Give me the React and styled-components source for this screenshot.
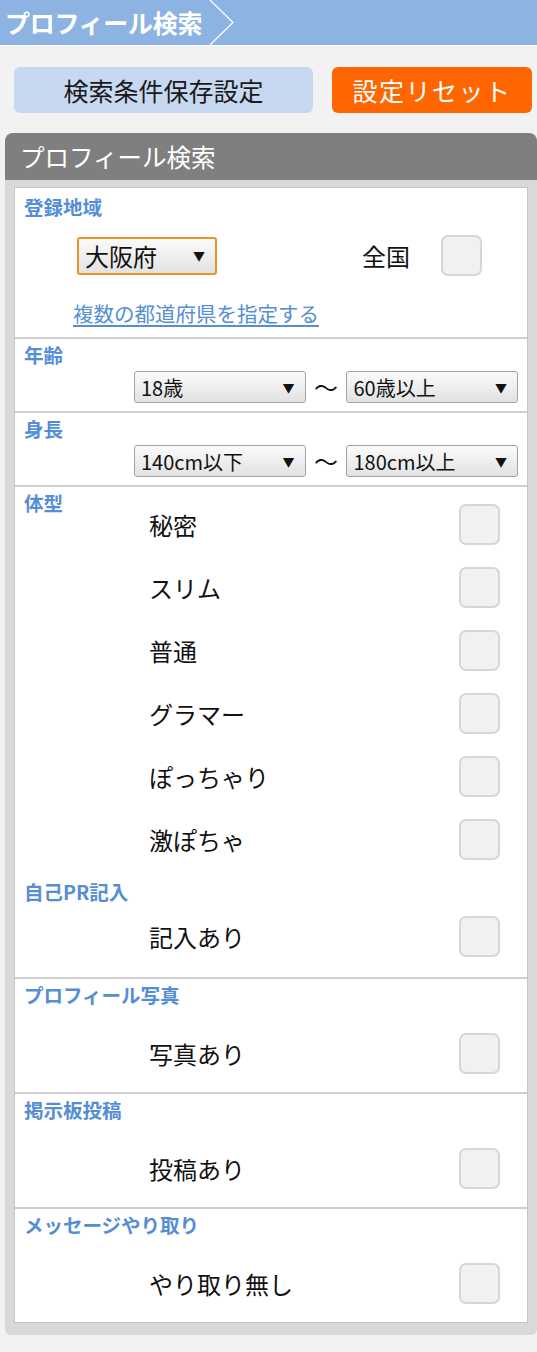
import React from 'react'
import styled, { createGlobalStyle } from 'styled-components'

const GlobalStyle = createGlobalStyle`
  body {
    margin: 0;
    background: #f2f2f2;
    font-family: "Noto Sans CJK JP", "Noto Sans", sans-serif;
    color: #111;
  }
`

const bodyTypes = ['秘密', 'スリム', '普通', 'グラマー', 'ぽっちゃり', '激ぽちゃ']

const extras = [
  { title: '自己PR記入', item: '記入あり', divider: false },
  { title: 'プロフィール写真', item: '写真あり', divider: true },
  { title: '掲示板投稿', item: '投稿あり', divider: true },
  { title: 'メッセージやり取り', item: 'やり取り無し', divider: true },
]

const Select = ({ value, width, height, size, focused }) => (
  <SelectBox $w={width} $h={height} $size={size} $focused={focused}>
    <span>{value}</span>
    <Arrow>▼</Arrow>
  </SelectBox>
)

const App = () => {
  return (
    <>
      <GlobalStyle />
      <TopBar>
        <Crumb>プロフィール検索</Crumb>
        <svg width="30" height="45" viewBox="0 0 30 45">
          <polyline points="3,0 26,22.5 3,45" fill="none" stroke="#fff" strokeWidth="1.3" />
        </svg>
      </TopBar>

      <ButtonRow>
        <ActionButton $w={299} $bg="#c6d9f1" $color="#1a1a1a">検索条件保存設定</ActionButton>
        <ActionButton $w={200} $bg="#ff6600" $color="#fff" $spacing={1.5}>設定リセット</ActionButton>
      </ButtonRow>

      <Panel>
        <PanelHead>プロフィール検索</PanelHead>
        <PanelBody>
          <Box>
            <Section $top={5} $bottom={10}>
              <Label>登録地域</Label>
              <RegionRow>
                <Select value="大阪府" width={140} height={38} size={24} focused />
                <Nationwide>全国</Nationwide>
                <Check type="checkbox" />
              </RegionRow>
              <PrefLink href="#">複数の都道府県を指定する</PrefLink>
            </Section>

            <Section $divider $top={2} $bottom={8}>
              <Label>年齢</Label>
              <RangeRow>
                <Select value="18歳" width={172} height={32} size={20} />
                <Tilde>〜</Tilde>
                <Select value="60歳以上" width={172} height={32} size={20} />
              </RangeRow>
            </Section>

            <Section $divider $top={2} $bottom={8}>
              <Label>身長</Label>
              <RangeRow>
                <Select value="140cm以下" width={172} height={32} size={20} />
                <Tilde>〜</Tilde>
                <Select value="180cm以上" width={172} height={32} size={20} />
              </RangeRow>
            </Section>

            <CheckSection $divider $inline $top={2} $bottom={0}>
              <Label>体型</Label>
              <CheckList $offset={4}>
                {bodyTypes.map((t) => (
                  <CheckRow key={t}>
                    <span>{t}</span>
                    <Check type="checkbox" />
                  </CheckRow>
                ))}
              </CheckList>
            </CheckSection>

            {extras.map((s) => (
              <CheckSection
                key={s.title}
                $divider={s.divider}
                $top={s.divider ? 2 : 7}
                $bottom={s.divider ? 7 : 9}
              >
                <Label>{s.title}</Label>
                <CheckList $offset={s.divider ? 13 : -1}>
                  <CheckRow>
                    <span>{s.item}</span>
                    <Check type="checkbox" />
                  </CheckRow>
                </CheckList>
              </CheckSection>
            ))}
          </Box>
        </PanelBody>
      </Panel>
    </>
  )
}

const TopBar = styled.header`
  display: flex;
  align-items: stretch;
  height: 45px;
  background: #8db3e2;
  border-bottom: 1px solid #fff;
  svg {
    display: block;
    margin-left: 5px;
  }
`

const Crumb = styled.h1`
  margin: 0;
  padding-left: 5px;
  font-size: 25px;
  font-weight: 700;
  line-height: 45px;
  color: #fff;
  letter-spacing: -0.3px;
`

const ButtonRow = styled.div`
  display: flex;
  gap: 19px;
  padding: 21px 5px 0 14px;
`

const ActionButton = styled.button`
  width: ${(p) => p.$w}px;
  height: 46px;
  border: none;
  border-radius: 6px;
  background: ${(p) => p.$bg};
  color: ${(p) => p.$color};
  font-family: inherit;
  font-size: 25px;
  letter-spacing: ${(p) => p.$spacing || 0}px;
  padding: 0;
`

const Panel = styled.section`
  width: 532px;
  margin: 20px 0 0 5px;
  background: #d9d9d9;
  border-radius: 8px 8px 6px 6px;
`

const PanelHead = styled.h2`
  margin: 0;
  height: 47px;
  padding-left: 15px;
  background: #7f7f7f;
  border-radius: 8px 8px 0 0;
  color: #fff;
  font-size: 24.5px;
  font-weight: 400;
  line-height: 47px;
`

const PanelBody = styled.div`
  padding: 7px 9px 12px 9px;
`

const Box = styled.div`
  background: #fff;
  border: 1px solid #c4c4c4;
`

const Section = styled.div`
  padding: ${(p) => p.$top}px 9px ${(p) => p.$bottom}px 9px;
  border-top: ${(p) => (p.$divider ? '2px solid #cfcfcf' : 'none')};
`

const Label = styled.div`
  font-size: 19.5px;
  font-weight: 700;
  line-height: 28px;
  color: #558ed5;
  white-space: nowrap;
`

const RegionRow = styled.div`
  display: flex;
  align-items: center;
  margin-top: 14px;
  padding-left: 53px;
`

const Nationwide = styled.span`
  margin-left: 145px;
  font-size: 24px;
`

const PrefLink = styled.a`
  display: inline-block;
  margin: 23px 0 0 49px;
  font-size: 20.5px;
  line-height: 28px;
  color: #558ed5;
  text-decoration: underline;
  text-underline-offset: 3px;
`

const RangeRow = styled.div`
  display: flex;
  align-items: center;
  margin-top: 2px;
  padding-left: 110px;
`

const Tilde = styled.span`
  width: 41px;
  text-align: center;
  font-size: 24px;
  line-height: 1;
`

const SelectBox = styled.div`
  display: flex;
  align-items: center;
  justify-content: space-between;
  box-sizing: border-box;
  width: ${(p) => p.$w}px;
  height: ${(p) => p.$h}px;
  padding: 0 10px 0 6px;
  border: ${(p) => (p.$focused ? '2px solid #e8922e' : '1px solid #a3a3a3')};
  border-radius: 3px;
  background: linear-gradient(#fbfbfb, #e2e2e2);
  font-size: ${(p) => p.$size}px;
  color: #111;
  white-space: nowrap;
`

const Arrow = styled.span`
  font-size: 12px;
`

const Check = styled.input`
  appearance: none;
  -webkit-appearance: none;
  margin: 0 0 0 31px;
  width: 41px;
  height: 41px;
  box-sizing: border-box;
  border: 2.5px solid #d6d6d6;
  border-radius: 7px;
  background: #f1f1f1;
`

const CheckSection = styled(Section)`
  display: grid;
  grid-template-columns: 125px 1fr;
  padding-right: 27px;
  ${Label} {
    grid-column: ${(p) => (p.$inline ? '1' : '1 / -1')};
  }
`

const CheckList = styled.div`
  grid-column: 2;
  margin-top: ${(p) => p.$offset}px;
`

const CheckRow = styled.div`
  display: flex;
  align-items: center;
  justify-content: space-between;
  height: 63px;
  font-size: 24px;
  color: #111;
  ${Check} {
    margin-left: 0;
  }
`

export default App
